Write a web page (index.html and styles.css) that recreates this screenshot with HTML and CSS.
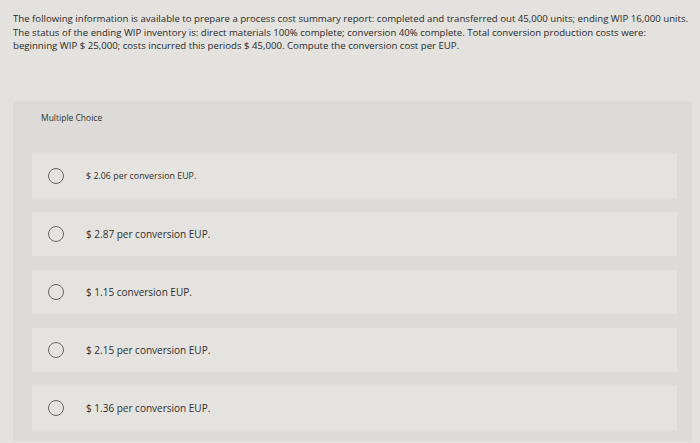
FILE: index.html
```html
<!DOCTYPE html>
<html>
<head>
<meta charset="utf-8">
<link rel="stylesheet" href="styles.css">
</head>
<body>
<div class="page">
  <p class="question">The following information is available to prepare a process cost summary report: completed and transferred out 45,000 units; ending WIP 16,000 units. The status of the ending WIP inventory is: direct materials 100% complete; conversion 40% complete. Total conversion production costs were:<br>beginning WIP $ 25,000; costs incurred this periods $ 45,000. Compute the conversion cost per EUP.</p>
  <div class="card">
    <div class="card-title">Multiple Choice</div>
    <div class="options">
      <div class="option"><span class="radio"></span><span class="label small">$ 2.06 per conversion EUP.</span></div>
      <div class="option"><span class="radio"></span><span class="label">$ 2.87 per conversion EUP.</span></div>
      <div class="option"><span class="radio"></span><span class="label">$ 1.15 conversion EUP.</span></div>
      <div class="option"><span class="radio"></span><span class="label">$ 2.15 per conversion EUP.</span></div>
      <div class="option"><span class="radio"></span><span class="label">$ 1.36 per conversion EUP.</span></div>
    </div>
  </div>
</div>
</body>
</html>
```
FILE: styles.css
```css
html, body {
  margin: 0;
  padding: 0;
  background: #e3e2de;
}
.page {
  padding: 12px 6px 0 13px;
  font-family: "Open Sans", Lato, sans-serif;
  color: #2a2a2a;
}
.question {
  margin: 0;
  font-size: 9.65px;
  line-height: 13.6px;
}
.card {
  margin-top: 48px;
  margin-right: 2px;
  background: #dcdbd7;
  padding: 12px 15px 11px 19px;
}
.card-title {
  font-size: 8.5px;
  color: #333;
  margin-left: 9px;
  line-height: 10px;
}
.options {
  margin-top: 31px;
  display: flex;
  flex-direction: column;
  gap: 14px;
}
.option {
  background: #e4e3df;
  height: 44px;
  display: flex;
  align-items: center;
  padding-left: 16px;
}
.radio {
  width: 16px;
  height: 16px;
  border: 1.3px solid #666;
  border-radius: 50%;
  box-sizing: border-box;
  flex: none;
}
.label {
  margin-left: 22px;
  font-size: 10px;
  color: #2e2e2e;
}
.label.small {
  font-size: 8.9px;
}
```
